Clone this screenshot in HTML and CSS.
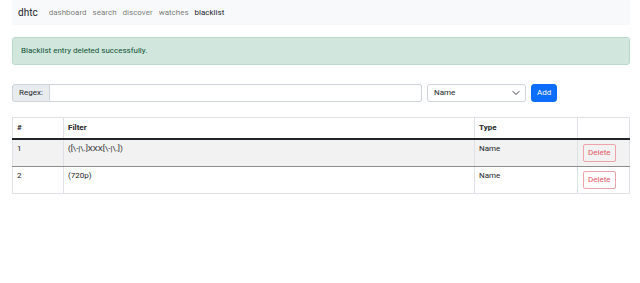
FILE: index.html
```html
<!DOCTYPE html>
<html lang="en">
<head>
    <meta charset="UTF-8">
    <meta name="viewport" content="width=device-width, initial-scale=1.0">
    <title>dhtc - blacklist</title>
    <link rel="stylesheet" href="styles.css">
</head>
<body>
    <div class="container">
        <nav class="navbar">
            <span class="brand">dhtc</span>
            <a href="#" class="nav-link">dashboard</a>
            <a href="#" class="nav-link">search</a>
            <a href="#" class="nav-link">discover</a>
            <a href="#" class="nav-link">watches</a>
            <a href="#" class="nav-link active">blacklist</a>
        </nav>

        <div class="alert">Blacklist entry deleted successfully.</div>

        <form class="add-form">
            <div class="input-group">
                <label for="regex" class="input-label">Regex:</label>
                <input type="text" name="regex" id="regex" class="input">
            </div>
            <div class="select-wrap">
                <select name="type" id="type" class="select">
                    <option value="name">Name</option>
                    <option value="file">File</option>
                </select>
                <svg class="chevron" width="8" height="6" viewBox="0 0 16 12"><path d="M2 3l6 6 6-6" fill="none" stroke="#343a40" stroke-width="2" stroke-linecap="round" stroke-linejoin="round"/></svg>
            </div>
            <button type="submit" class="btn-add">Add</button>
        </form>

        <table class="table">
            <thead>
                <tr>
                    <th class="col-num">#</th>
                    <th class="col-filter">Filter</th>
                    <th class="col-type">Type</th>
                    <th class="col-action"></th>
                </tr>
            </thead>
            <tbody>
                <tr class="striped">
                    <td>1</td>
                    <td>([\-|\.]XXX[\-|\.])</td>
                    <td>Name</td>
                    <td><button class="btn-delete">Delete</button></td>
                </tr>
                <tr>
                    <td>2</td>
                    <td>(720p)</td>
                    <td>Name</td>
                    <td><button class="btn-delete">Delete</button></td>
                </tr>
            </tbody>
        </table>
    </div>
</body>
</html>
```

FILE: styles.css
```css
* {
    box-sizing: border-box;
    margin: 0;
    padding: 0;
}

body {
    background-color: #fff;
    color: #212529;
    font-family: Roboto, sans-serif;
    font-size: 8px;
    line-height: 12px;
}

.container {
    padding: 0 10px 0 12px;
}

.navbar {
    display: flex;
    align-items: center;
    height: 25px;
    padding: 0 6px;
    background-color: #f8f9fa;
}

.brand {
    font-size: 10px;
    margin-right: 8px;
    color: #212529;
}

.nav-link {
    padding: 0 3px;
    color: rgba(0, 0, 0, 0.55);
    text-decoration: none;
}

.nav-link.active {
    color: #212529;
}

.alert {
    margin-top: 12px;
    padding: 7px 8px;
    background-color: #d1e7dd;
    border: 1px solid #badbcc;
    border-radius: 3px;
    color: #0f5132;
}

.add-form {
    display: flex;
    align-items: center;
    gap: 5px;
    margin-top: 19px;
}

.input-group {
    display: flex;
    width: 410px;
    height: 18px;
}

.input-label {
    display: flex;
    align-items: center;
    padding: 0 6px;
    background-color: #e9ecef;
    border: 1px solid #ced4da;
    border-radius: 3px 0 0 3px;
    color: #212529;
}

.input {
    flex: 1;
    border: 1px solid #ced4da;
    border-left: none;
    border-radius: 0 3px 3px 0;
    font: inherit;
}

.select-wrap {
    position: relative;
    width: 99px;
    height: 18px;
}

.select {
    width: 100%;
    height: 100%;
    padding: 0 6px;
    border: 1px solid #ced4da;
    border-radius: 3px;
    background-color: #fff;
    color: #212529;
    font: inherit;
    appearance: none;
}

.chevron {
    position: absolute;
    right: 6px;
    top: 6px;
}

.btn-add {
    height: 18px;
    padding: 0 5px;
    background-color: #0d6efd;
    border: 1px solid #0d6efd;
    border-radius: 3px;
    color: #fff;
    font: inherit;
}

.table {
    width: 100%;
    margin-top: 15px;
    border-collapse: collapse;
}

.table th,
.table td {
    padding: 4px 4px;
    border: 1px solid #dee2e6;
    text-align: left;
    vertical-align: top;
}

.table th {
    font-weight: bold;
    border-bottom: 2px solid #212529;
}

.col-num { width: 51px; }
.col-type { width: 103px; }
.col-action { width: 52px; }

.table td {
    height: 27px;
    padding-top: 3px;
}

.striped td {
    background-color: #f2f2f2;
    border-bottom: 1px solid #8c8c8c;
}

.btn-delete {
    margin: 1px 0 0 1px;
    padding: 2px 4px;
    background: transparent;
    border: 1px solid #eea2aa;
    border-radius: 2px;
    color: #e05666;
    font: inherit;
}
```
